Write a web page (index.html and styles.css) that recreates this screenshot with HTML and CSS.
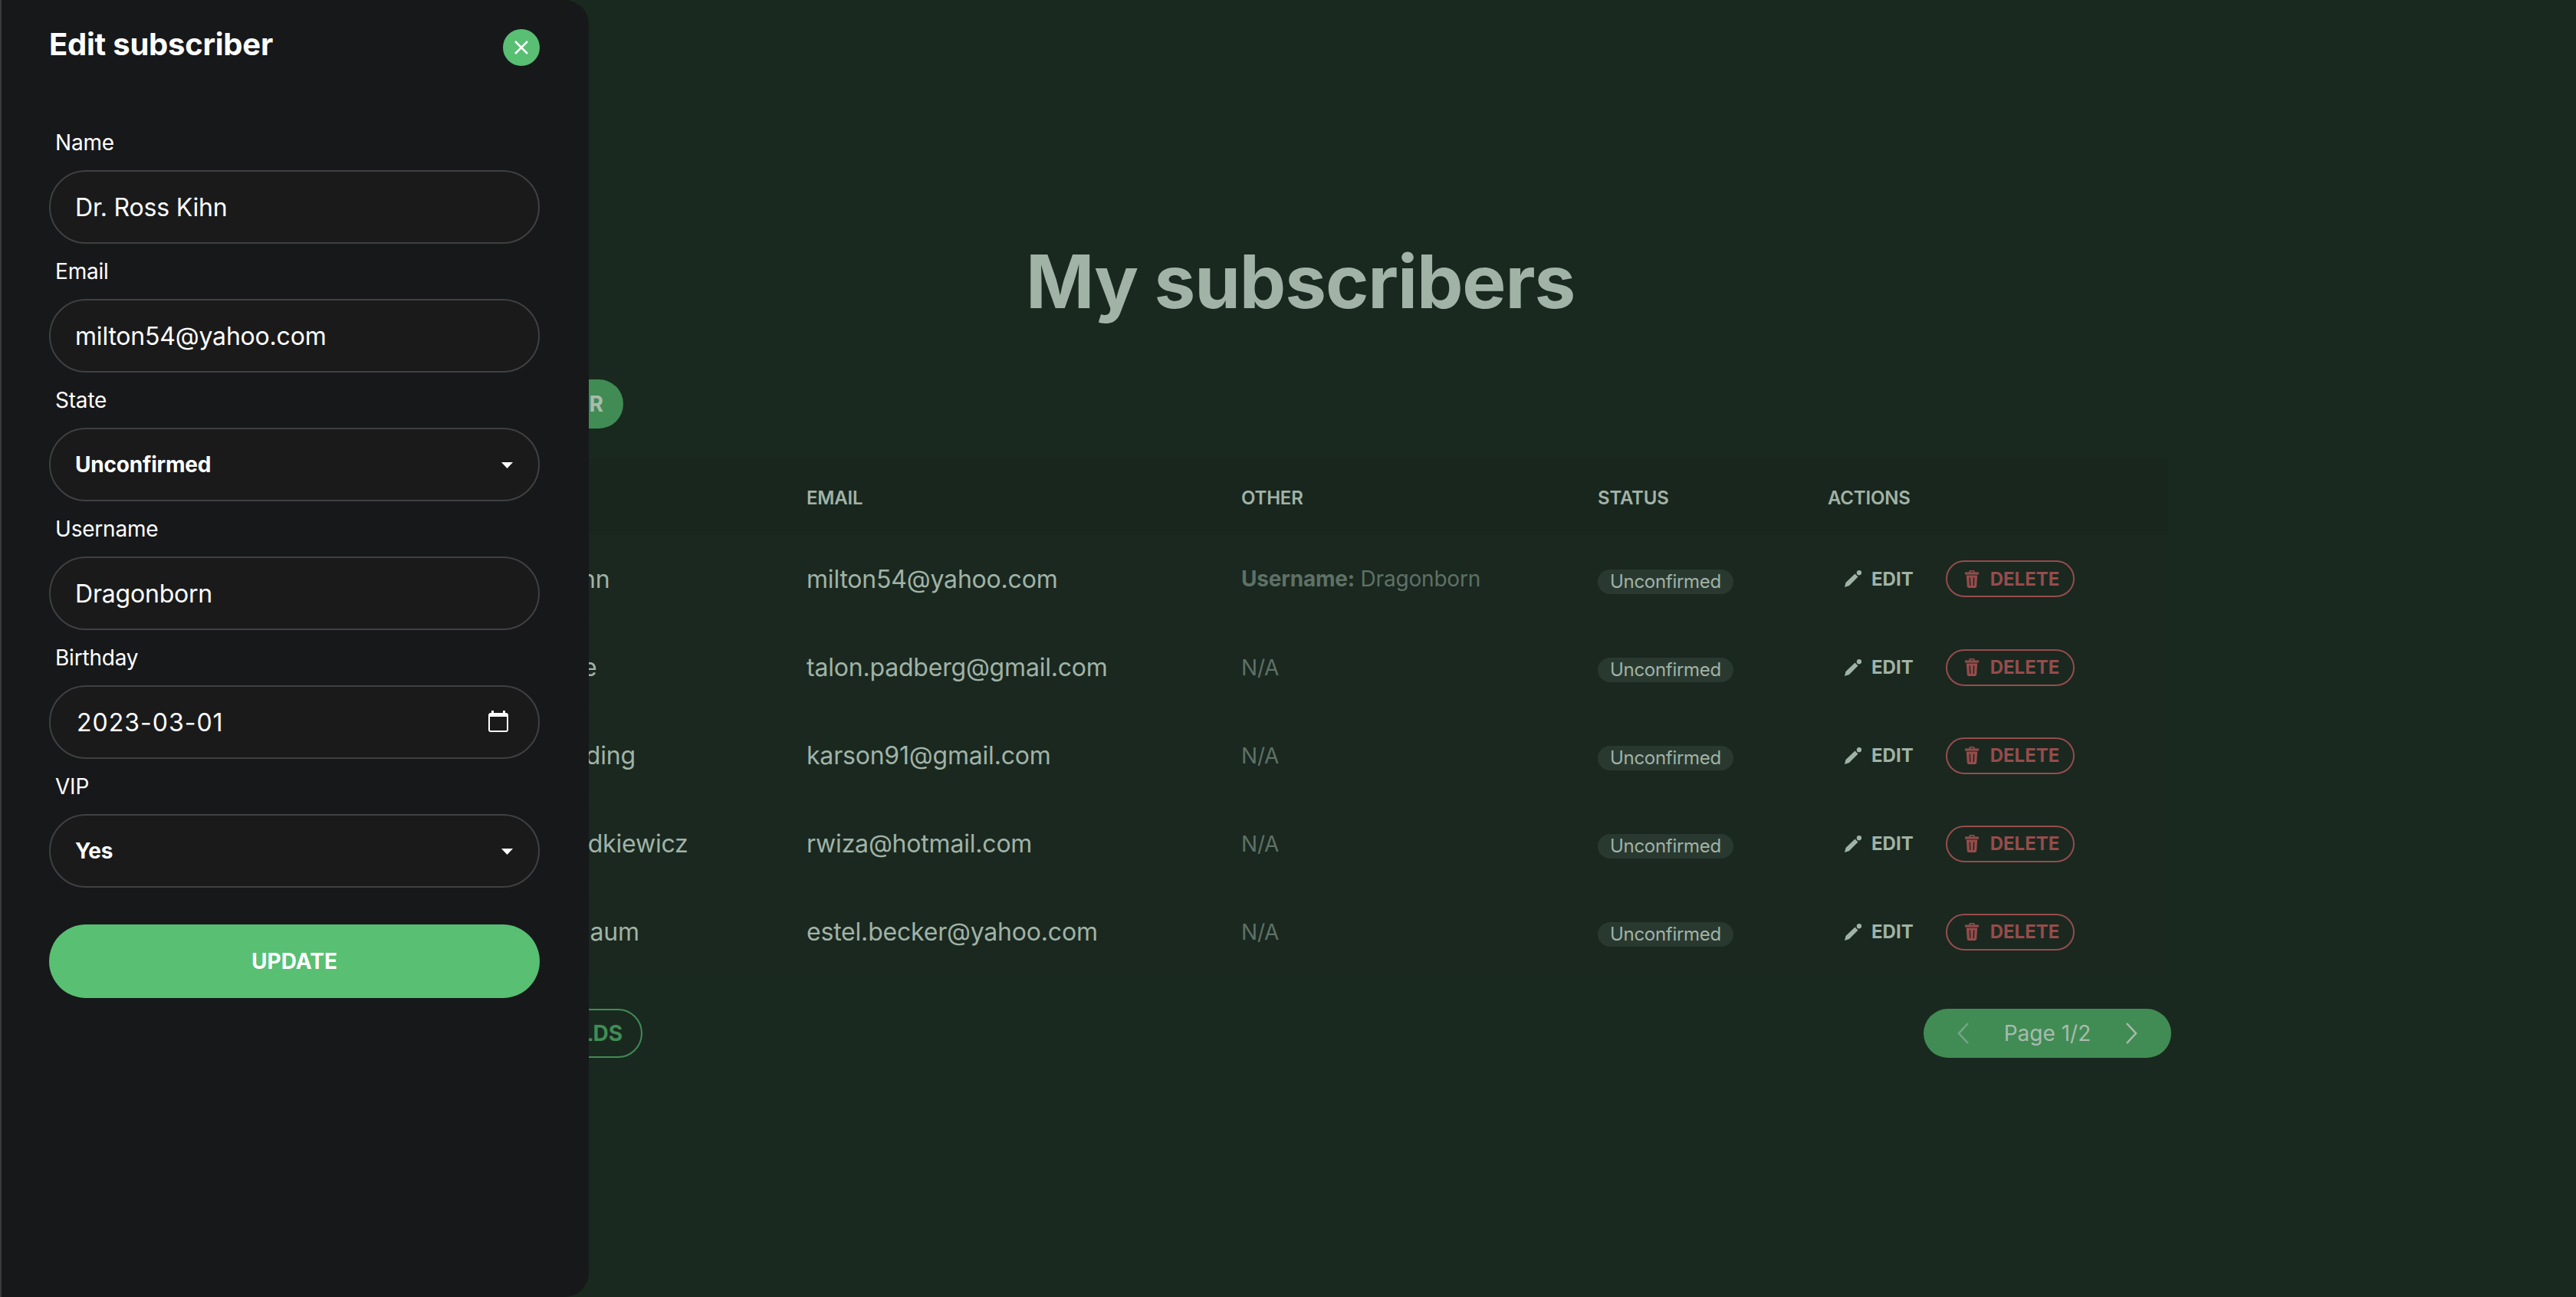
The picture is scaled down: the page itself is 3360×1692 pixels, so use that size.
FILE: index.html

```html
<!DOCTYPE html>
<html lang="en">
  <head>
    <meta charset="UTF-8">
    <title>My subscribers</title>
    <link rel="stylesheet" href="styles.css">
  </head>
  <body>
    <main id="page">
      <h1 class="page-title">My subscribers</h1>
      <div class="toolbar">
        <button class="btn-add">ADD SUBSCRIBER</button>
      </div>
      <table class="subs">
        <colgroup>
          <col class="col-name">
          <col class="col-email">
          <col class="col-other">
          <col class="col-status">
          <col>
        </colgroup>
        <thead>
          <tr><th>NAME</th><th>EMAIL</th><th>OTHER</th><th>STATUS</th><th>ACTIONS</th></tr>
        </thead>
        <tbody>
          <tr>
            <td>Dr. Ross Kihn</td>
            <td>milton54@yahoo.com</td>
            <td class="other"><b>Username:</b> Dragonborn</td>
            <td><span class="badge">Unconfirmed</span></td>
            <td>
              <div class="actions">
                <button class="btn-edit"><svg class="icon-pencil" viewBox="0 0 22 22"><path d="M0 22l1.500-6L13.500 4.500l4 4L6 20z"/><circle cx="19" cy="3.200" r="3.200"/></svg>EDIT</button>
                <button class="btn-delete"><svg class="icon-trash" viewBox="0 0 18 23"><path fill-rule="evenodd" d="M6 0h6l1 2.500h5V5.500H0V2.500h5zM7 1.500l-.4 1h4.800l-.4-1zM1.800 6.500h14.400l-1 14.500c-.1 1.200-1 2-2.200 2H5c-1.200 0-2.100-.8-2.200-2zM5.600 9.500l.4 10.500h1.400l-.3-10.500zM10.900 9.500l-.3 10.500H12l.4-10.500z"/></svg>DELETE</button>
              </div>
            </td>
          </tr>
          <tr>
            <td>Jaylen Pace</td>
            <td>talon.padberg@gmail.com</td>
            <td class="other">N/A</td>
            <td><span class="badge">Unconfirmed</span></td>
            <td>
              <div class="actions">
                <button class="btn-edit"><svg class="icon-pencil" viewBox="0 0 22 22"><path d="M0 22l1.500-6L13.500 4.500l4 4L6 20z"/><circle cx="19" cy="3.200" r="3.200"/></svg>EDIT</button>
                <button class="btn-delete"><svg class="icon-trash" viewBox="0 0 18 23"><path fill-rule="evenodd" d="M6 0h6l1 2.500h5V5.500H0V2.500h5zM7 1.500l-.4 1h4.800l-.4-1zM1.800 6.500h14.400l-1 14.500c-.1 1.200-1 2-2.200 2H5c-1.200 0-2.100-.8-2.200-2zM5.600 9.500l.4 10.500h1.400l-.3-10.500zM10.900 9.500l-.3 10.500H12l.4-10.500z"/></svg>DELETE</button>
              </div>
            </td>
          </tr>
          <tr>
            <td>Karson Harding</td>
            <td>karson91@gmail.com</td>
            <td class="other">N/A</td>
            <td><span class="badge">Unconfirmed</span></td>
            <td>
              <div class="actions">
                <button class="btn-edit"><svg class="icon-pencil" viewBox="0 0 22 22"><path d="M0 22l1.500-6L13.500 4.500l4 4L6 20z"/><circle cx="19" cy="3.200" r="3.200"/></svg>EDIT</button>
                <button class="btn-delete"><svg class="icon-trash" viewBox="0 0 18 23"><path fill-rule="evenodd" d="M6 0h6l1 2.500h5V5.500H0V2.500h5zM7 1.500l-.4 1h4.800l-.4-1zM1.800 6.500h14.400l-1 14.500c-.1 1.200-1 2-2.200 2H5c-1.200 0-2.100-.8-2.200-2zM5.600 9.500l.4 10.500h1.400l-.3-10.500zM10.900 9.500l-.3 10.500H12l.4-10.500z"/></svg>DELETE</button>
              </div>
            </td>
          </tr>
          <tr>
            <td>Mr. Tim Wodkiewicz</td>
            <td>rwiza@hotmail.com</td>
            <td class="other">N/A</td>
            <td><span class="badge">Unconfirmed</span></td>
            <td>
              <div class="actions">
                <button class="btn-edit"><svg class="icon-pencil" viewBox="0 0 22 22"><path d="M0 22l1.500-6L13.500 4.500l4 4L6 20z"/><circle cx="19" cy="3.200" r="3.200"/></svg>EDIT</button>
                <button class="btn-delete"><svg class="icon-trash" viewBox="0 0 18 23"><path fill-rule="evenodd" d="M6 0h6l1 2.500h5V5.500H0V2.500h5zM7 1.500l-.4 1h4.800l-.4-1zM1.800 6.500h14.400l-1 14.500c-.1 1.200-1 2-2.200 2H5c-1.200 0-2.100-.8-2.200-2zM5.600 9.500l.4 10.500h1.400l-.3-10.500zM10.900 9.500l-.3 10.500H12l.4-10.500z"/></svg>DELETE</button>
              </div>
            </td>
          </tr>
          <tr>
            <td>Estel Tannhaum</td>
            <td>estel.becker@yahoo.com</td>
            <td class="other">N/A</td>
            <td><span class="badge">Unconfirmed</span></td>
            <td>
              <div class="actions">
                <button class="btn-edit"><svg class="icon-pencil" viewBox="0 0 22 22"><path d="M0 22l1.500-6L13.500 4.500l4 4L6 20z"/><circle cx="19" cy="3.200" r="3.200"/></svg>EDIT</button>
                <button class="btn-delete"><svg class="icon-trash" viewBox="0 0 18 23"><path fill-rule="evenodd" d="M6 0h6l1 2.500h5V5.500H0V2.500h5zM7 1.500l-.4 1h4.800l-.4-1zM1.800 6.500h14.400l-1 14.500c-.1 1.200-1 2-2.200 2H5c-1.200 0-2.100-.8-2.200-2zM5.600 9.500l.4 10.500h1.400l-.3-10.500zM10.900 9.500l-.3 10.500H12l.4-10.500z"/></svg>DELETE</button>
              </div>
            </td>
          </tr>
        </tbody>
      </table>
      <div class="footer">
        <button class="btn-fields">EDIT FIELDS</button>
        <div class="pager">
          <svg class="chevron dim" viewBox="0 0 16 28"><path d="M14 1L2 14l12 13"/></svg>
          <span>Page 1/2</span>
          <svg class="chevron" viewBox="0 0 16 28"><path d="M2 1l12 13L2 27"/></svg>
        </div>
      </div>
    </main>

    <aside id="drawer">
      <div class="drawer-head">
        <h2>Edit subscriber</h2>
        <button class="btn-close">
          <svg viewBox="0 0 20 20"><path d="M2 2l16 16M18 2L2 18"/></svg>
        </button>
      </div>
      <form class="drawer-form">
        <div class="field">
          <label>Name</label>
          <input type="text" value="Dr. Ross Kihn">
        </div>
        <div class="field">
          <label>Email</label>
          <input type="text" value="milton54@yahoo.com">
        </div>
        <div class="field">
          <label>State</label>
          <div class="control">
            <select><option>Unconfirmed</option></select>
            <svg class="caret" viewBox="0 0 15 8"><path d="M0 0h15L7.500 8z"/></svg>
          </div>
        </div>
        <div class="field">
          <label>Username</label>
          <input type="text" value="Dragonborn">
        </div>
        <div class="field">
          <label>Birthday</label>
          <div class="control">
            <input class="date" type="text" value="2023-03-01">
            <svg class="calendar" viewBox="0 0 26 28"><path fill-rule="evenodd" d="M4 0h3v3h12V0h3v3h1c1.700 0 3 1.300 3 3v19c0 1.700-1.300 3-3 3H3c-1.700 0-3-1.300-3-3V6c0-1.700 1.300-3 3-3h1zM2 8v17c0 .6.400 1 1 1h20c.6 0 1-.4 1-1V8z"/></svg>
          </div>
        </div>
        <div class="field">
          <label>VIP</label>
          <div class="control">
            <select><option>Yes</option></select>
            <svg class="caret" viewBox="0 0 15 8"><path d="M0 0h15L7.500 8z"/></svg>
          </div>
        </div>
        <button type="button" class="btn-update">UPDATE</button>
      </form>
    </aside>
  </body>
</html>
```

FILE: styles.css

```css
* {
  box-sizing: border-box;
}

html, body {
  margin: 0;
  height: 100%;
  overflow: hidden;
}

body {
  background: #1a2920;
  color: #a0b3a6;
  font-family: Inter, "Liberation Sans", sans-serif;
  font-size: 32px;
  letter-spacing: -0.2px;
}

button {
  font-family: inherit;
  cursor: pointer;
}

/* page behind the drawer */
#page {
  width: 2272px;
  margin-left: 560px;
  padding-top: 304px;
}

.page-title {
  margin: 0;
  font-size: 96px;
  line-height: 126px;
  font-weight: 700;
  letter-spacing: -1.1px;
  text-align: center;
}

.toolbar {
  margin-top: 65px;
  display: flex;
}

.btn-add {
  height: 64px;
  width: 253px;
  padding: 0 26px 0 0;
  display: flex;
  align-items: center;
  justify-content: flex-end;
  border: 0;
  border-radius: 32px;
  background: #418c54;
  color: #a9bbae;
  font-size: 28px;
  font-weight: 700;
  white-space: nowrap;
}

.subs {
  width: 2268px;
  margin-top: 39px;
  table-layout: fixed;
  border-collapse: collapse;
}

.col-name { width: 455px; }
.col-email { width: 567px; }
.col-other { width: 465px; }
.col-status { width: 300px; }

.subs th {
  height: 100px;
  padding: 3px 0 0 37px;
  background: #19261e;
  font-size: 24px;
  font-weight: 600;
  text-align: left;
}

.subs tbody {
  background: #1a2820;
}

.subs td {
  height: 115px;
  padding: 0 0 0 37px;
  white-space: nowrap;
}

.subs tbody tr {
  border-bottom: 1px solid #1b2a21;
}

.subs td.other {
  font-size: 28px;
  color: #5e7165;
}

.badge {
  display: inline-block;
  padding: 0 16px;
  height: 32px;
  line-height: 32px;
  border-radius: 16px;
  background: #2a3930;
  font-size: 24px;
  letter-spacing: -0.3px;
}

.actions {
  display: flex;
  align-items: center;
  gap: 20px;
}

.btn-edit, .btn-delete {
  display: flex;
  align-items: center;
  height: 48px;
  background: none;
  font-size: 24px;
  font-weight: 700;
  letter-spacing: 0;
}

.btn-edit {
  gap: 13px;
  padding: 0 22px;
  border: 0;
  color: #a0b3a6;
}

.btn-delete {
  gap: 15px;
  padding: 0 18px 0 23px;
  border: 2px solid #964c4b;
  border-radius: 24px;
  color: #964c4b;
}

.icon-pencil {
  width: 22px;
  height: 22px;
  fill: #a0b3a6;
}

.icon-trash {
  width: 18px;
  height: 23px;
  fill: #964c4b;
}

.footer {
  margin-top: 42px;
  display: flex;
  justify-content: space-between;
  align-items: center;
}

.btn-fields {
  height: 64px;
  width: 278px;
  padding: 0 24px 0 0;
  border: 2px solid #418c54;
  border-radius: 32px;
  background: none;
  color: #418c54;
  font-size: 28px;
  font-weight: 700;
  white-space: nowrap;
  text-align: right;
}

.pager {
  width: 323px;
  height: 64px;
  padding: 0 44px;
  display: flex;
  align-items: center;
  justify-content: space-between;
  border-radius: 32px;
  background: #418c54;
  color: #a9bbae;
  font-size: 28px;
  letter-spacing: 0;
}

.chevron {
  width: 16px;
  height: 28px;
  fill: none;
  stroke: #a9bbae;
  stroke-width: 2.5;
}

.chevron.dim {
  stroke: #75a585;
}

/* edit drawer */
#drawer {
  position: fixed;
  top: 0;
  left: 0;
  width: 768px;
  height: 100%;
  padding: 0 64px;
  border-left: 2px solid #3b3b3d;
  border-radius: 0 32px 32px 0;
  background: #17181a;
  color: #fff;
}

.drawer-head {
  padding-top: 32px;
  display: flex;
  justify-content: space-between;
  align-items: flex-start;
  margin-left: -2px;
}

.drawer-head h2 {
  margin: 0;
  font-size: 40px;
  line-height: 52px;
  font-weight: 700;
  letter-spacing: -0.25px;
}

.btn-close {
  width: 48px;
  height: 48px;
  margin-top: 6px;
  padding: 0;
  display: flex;
  align-items: center;
  justify-content: center;
  border: 0;
  border-radius: 50%;
  background: #58bf73;
}

.btn-close svg {
  width: 20px;
  height: 20px;
  fill: none;
  stroke: #fff;
  stroke-width: 2.5;
}

.drawer-form {
  margin: 64px 0 0 -2px;
}

.field label {
  display: block;
  height: 72px;
  padding-left: 8px;
  font-size: 28px;
  line-height: 72px;
}

.field input, .field select {
  display: block;
  width: 100%;
  height: 96px;
  padding: 0 32px;
  border: 2px solid #404042;
  border-radius: 48px;
  background: #1a1a1b;
  color: #fff;
  font-family: inherit;
  font-size: 32px;
  letter-spacing: -0.2px;
  outline: none;
  appearance: none;
}

.field select {
  font-size: 28px;
  font-weight: 700;
}

.field input.date {
  padding-left: 34px;
  letter-spacing: 1px;
}

.control {
  position: relative;
}

.caret {
  position: absolute;
  right: 35px;
  top: 45px;
  width: 15px;
  height: 8px;
  fill: #fff;
}

.calendar {
  position: absolute;
  right: 41px;
  top: 33px;
  width: 26px;
  height: 28px;
  fill: #fff;
}

.btn-update {
  display: block;
  width: 100%;
  height: 96px;
  margin-top: 48px;
  border: 0;
  border-radius: 48px;
  background: #58bf73;
  color: #fff;
  font-size: 28px;
  font-weight: 700;
}
```
